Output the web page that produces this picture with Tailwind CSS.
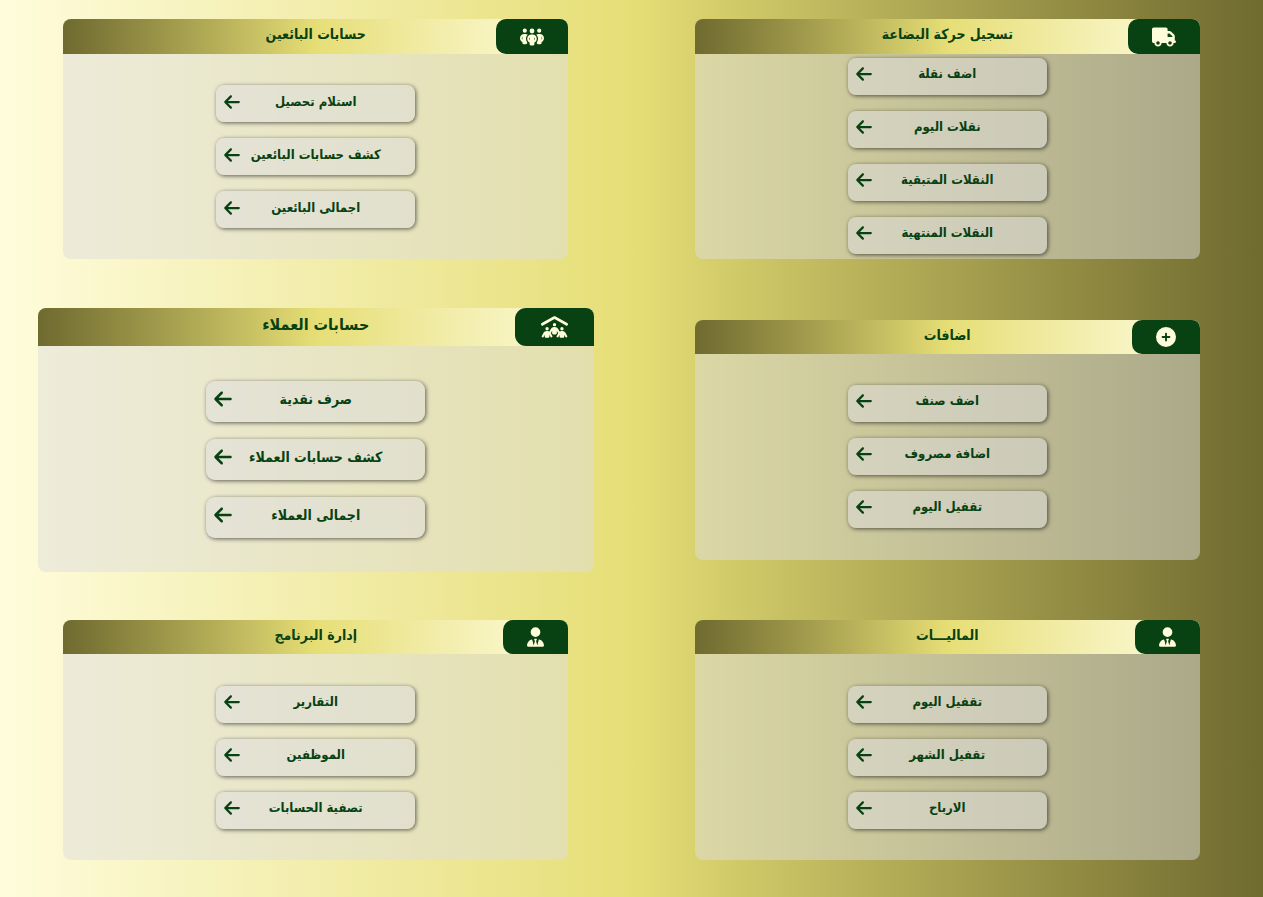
<!DOCTYPE html>
<html lang="ar" dir="rtl">
<head>
<meta charset="utf-8">
<meta name="viewport" content="width=device-width, initial-scale=1">
<title>لوحة التحكم</title>
<script src="https://cdn.jsdelivr.net/npm/@tailwindcss/browser@4"></script>
</head>
<body class="min-h-screen bg-linear-to-r from-[#fffcdc] via-[#e6de75] to-[#6f6a2f] font-['DejaVu_Sans_Condensed','DejaVu_Sans',sans-serif] font-bold text-[#084112]">
<svg class="hidden" aria-hidden="true">
  <symbol id="arrow" viewBox="0 0 448 512"><path d="M9.400 233.400c-12.500 12.500-12.500 32.800 0 45.300l160 160c12.500 12.500 32.800 12.500 45.300 0s12.500-32.800 0-45.300L109.200 288 416 288c17.700 0 32-14.300 32-32s-14.300-32-32-32l-306.700 0L214.600 118.600c12.500-12.500 12.500-32.800 0-45.300s-32.800-12.500-45.300 0l-160 160z"/></symbol>
  <symbol id="truck" viewBox="0 0 640 512"><path d="M48 0C21.500 0 0 21.500 0 48V368c0 26.500 21.500 48 48 48H64c0 53 43 96 96 96s96-43 96-96H384c0 53 43 96 96 96s96-43 96-96h32c17.700 0 32-14.300 32-32s-14.300-32-32-32V288 256 237.300c0-17-6.700-33.300-18.700-45.300L512 114.700c-12-12-28.300-18.700-45.300-18.700H416V48c0-26.500-21.500-48-48-48H48zM416 160h50.700L544 237.300V256H416V160zM112 416a48 48 0 1 1 96 0 48 48 0 1 1 -96 0zm368-48a48 48 0 1 1 0 96 48 48 0 1 1 0-96z"/></symbol>
  <symbol id="group" viewBox="0 0 640 512"><path d="M72 88a56 56 0 1 1 112 0A56 56 0 1 1 72 88zM64 245.700C54 256.900 48 271.800 48 288s6 31.100 16 42.300V245.700zm144.400-49.300C178.700 222.700 160 261.200 160 304c0 34.300 12 65.800 32 90.500V416c0 17.700-14.300 32-32 32H96c-17.700 0-32-14.300-32-32V389.200C26.200 371.200 0 332.700 0 288c0-61.900 50.100-112 112-112h32c24 0 46.200 7.500 64.400 20.300zM448 416V394.500c20-24.700 32-56.200 32-90.500c0-42.800-18.700-81.300-48.400-107.700C449.800 183.500 472 176 496 176h32c61.900 0 112 50.100 112 112c0 44.700-26.200 83.200-64 101.200V416c0 17.700-14.300 32-32 32H480c-17.700 0-32-14.300-32-32zm8-328a56 56 0 1 1 112 0A56 56 0 1 1 456 88zM576 245.700v84.700c10-11.300 16-26.100 16-42.300s-6-31.100-16-42.300zM320 32a64 64 0 1 1 0 128 64 64 0 1 1 0-128zM240 304c0 16.200 6 31 16 42.300V261.700c-10 11.300-16 26.100-16 42.300zm144-42.300v84.700c10-11.300 16-26.100 16-42.300s-6-31.100-16-42.300zM448 304c0 44.700-26.200 83.200-64 101.200V448c0 17.700-14.300 32-32 32H288c-17.700 0-32-14.300-32-32V405.200c-37.800-18-64-56.500-64-101.200c0-61.900 50.100-112 112-112h32c61.900 0 112 50.100 112 112z"/></symbol>
  <symbol id="roof" viewBox="0 0 640 512"><path d="M335.500 4l288 160c15.400 8.600 21 28.100 12.400 43.500s-28.100 21-43.500 12.400L320 68.600 47.500 220c-15.400 8.600-34.900 3-43.500-12.400s-3-34.900 12.400-43.500L304.500 4c9.700-5.400 21.400-5.400 31.100 0zM320 160a40 40 0 1 1 0 80 40 40 0 1 1 0-80zM144 256a40 40 0 1 1 0 80 40 40 0 1 1 0-80zm312 40a40 40 0 1 1 80 0 40 40 0 1 1-80 0zM226.900 491.400L200 441.500V480c0 17.700-14.300 32-32 32H120c-17.700 0-32-14.300-32-32V441.500L61.100 491.400c-6.300 11.700-20.800 16-32.500 9.800s-16-20.800-9.800-32.500l37.900-70.300c15.300-28.500 45.100-46.300 77.500-46.300h19.500c16.300 0 31.900 4.500 45.400 12.600l33.600-62.300c15.300-28.500 45.100-46.300 77.500-46.300h19.500c32.400 0 62.100 17.800 77.500 46.300l33.600 62.300c13.500-8.100 29.100-12.600 45.400-12.600h19.500c32.400 0 62.100 17.800 77.500 46.300l37.900 70.300c6.300 11.700 1.900 26.200-9.800 32.500s-26.200 1.900-32.500-9.800L552 441.500V480c0 17.700-14.300 32-32 32H472c-17.700 0-32-14.300-32-32V441.500l-26.900 49.900c-6.300 11.700-20.800 16-32.500 9.800s-16-20.800-9.800-32.500l36.300-67.500c-1.700-1.700-3.200-3.600-4.300-5.800L376 345.500V400c0 17.700-14.300 32-32 32H296c-17.700 0-32-14.300-32-32V345.500l-26.900 49.900c-1.200 2.200-2.600 4.100-4.300 5.800l36.300 67.500c6.300 11.700 1.900 26.200-9.800 32.500s-26.200 1.900-32.500-9.800z"/></symbol>
  <symbol id="plus" viewBox="0 0 512 512"><path fill-rule="evenodd" d="M256 512A256 256 0 1 0 256 0a256 256 0 1 0 0 512zM232 344V280H168a24 24 0 1 1 0-48h64V168a24 24 0 1 1 48 0v64h64a24 24 0 1 1 0 48H280v64a24 24 0 1 1-48 0z"/></symbol>
  <symbol id="tie" viewBox="0 0 448 512"><path d="M96 128a128 128 0 1 0 256 0A128 128 0 1 0 96 128zm94.500 200.200l18.600 31L175.800 483.100l-36-146.900c-2-8.100-9.800-13.400-17.900-11.300C51.900 342.400 0 405.800 0 481.300c0 17 13.800 30.700 30.700 30.700H417.300c17 0 30.700-13.800 30.700-30.700c0-75.500-51.900-138.900-121.900-156.400c-8.100-2-15.900 3.300-17.900 11.300l-36 146.900L238.900 359.200l18.600-31c6.400-10.700-1.300-24.200-13.700-24.200H224 204.300c-12.400 0-20.100 13.600-13.700 24.200z"/></symbol>
</svg>
<main class="grid grid-cols-2 grid-rows-[241px_240px_240px] items-start justify-items-center gap-y-[60px] pt-[19px] pb-9">

  <section class="flex h-60 w-4/5 flex-col overflow-hidden rounded-lg bg-[#ddd]/50">
    <header class="grid h-[35px] grid-cols-[1fr_auto_1fr] bg-linear-to-l from-[#fffcdc] via-[#e6de75] to-[#6f6a2f]">
      <span class="flex items-center justify-self-start rounded-l-[10px] bg-[#084112] px-6 text-[#fffcdc]"><svg class="h-5 w-6 fill-current"><use href="#truck"/></svg></span>
      <h2 class="text-sm leading-[30px]">تسجيل حركة البضاعة</h2>
    </header>
    <div class="flex flex-1 flex-col items-center justify-center gap-4 pb-0.5">
      <button class="grid h-[37px] w-[199px] grid-cols-[16px_1fr_16px] items-center rounded-lg bg-[#ddd]/50 px-2 pb-1 text-[13px] shadow-[1px_1px_4px_rgba(0,0,0,0.6)]"><span class="col-start-2 whitespace-nowrap">اضف نقلة</span><svg class="h-[18px] w-4 fill-current"><use href="#arrow"/></svg></button>
      <button class="grid h-[37px] w-[199px] grid-cols-[16px_1fr_16px] items-center rounded-lg bg-[#ddd]/50 px-2 pb-1 text-[13px] shadow-[1px_1px_4px_rgba(0,0,0,0.6)]"><span class="col-start-2 whitespace-nowrap">نقلات اليوم</span><svg class="h-[18px] w-4 fill-current"><use href="#arrow"/></svg></button>
      <button class="grid h-[37px] w-[199px] grid-cols-[16px_1fr_16px] items-center rounded-lg bg-[#ddd]/50 px-2 pb-1 text-[13px] shadow-[1px_1px_4px_rgba(0,0,0,0.6)]"><span class="col-start-2 whitespace-nowrap">النقلات المتبقية</span><svg class="h-[18px] w-4 fill-current"><use href="#arrow"/></svg></button>
      <button class="grid h-[37px] w-[199px] grid-cols-[16px_1fr_16px] items-center rounded-lg bg-[#ddd]/50 px-2 pb-1 text-[13px] shadow-[1px_1px_4px_rgba(0,0,0,0.6)]"><span class="col-start-2 whitespace-nowrap">النقلات المنتهية</span><svg class="h-[18px] w-4 fill-current"><use href="#arrow"/></svg></button>
    </div>
  </section>

  <section class="flex h-60 w-4/5 flex-col overflow-hidden rounded-lg bg-[#ddd]/50">
    <header class="grid h-[35px] grid-cols-[1fr_auto_1fr] bg-linear-to-l from-[#fffcdc] via-[#e6de75] to-[#6f6a2f]">
      <span class="flex items-center justify-self-start rounded-l-[10px] bg-[#084112] px-6 text-[#fffcdc]"><svg class="h-5 w-6 fill-current"><use href="#group"/></svg></span>
      <h2 class="text-sm leading-[30px]">حسابات البائعين</h2>
    </header>
    <div class="flex flex-1 flex-col items-center justify-center gap-4">
      <button class="grid h-[37px] w-[199px] grid-cols-[16px_1fr_16px] items-center rounded-lg bg-[#ddd]/50 px-2 pb-1 text-[13px] shadow-[1px_1px_4px_rgba(0,0,0,0.6)]"><span class="col-start-2 whitespace-nowrap">استلام تحصيل</span><svg class="h-[18px] w-4 fill-current"><use href="#arrow"/></svg></button>
      <button class="grid h-[37px] w-[199px] grid-cols-[16px_1fr_16px] items-center rounded-lg bg-[#ddd]/50 px-2 pb-1 text-[13px] shadow-[1px_1px_4px_rgba(0,0,0,0.6)]"><span class="col-start-2 whitespace-nowrap">كشف حسابات البائعين</span><svg class="h-[18px] w-4 fill-current"><use href="#arrow"/></svg></button>
      <button class="grid h-[37px] w-[199px] grid-cols-[16px_1fr_16px] items-center rounded-lg bg-[#ddd]/50 px-2 pb-1 text-[13px] shadow-[1px_1px_4px_rgba(0,0,0,0.6)]"><span class="col-start-2 whitespace-nowrap">اجمالى البائعين</span><svg class="h-[18px] w-4 fill-current"><use href="#arrow"/></svg></button>
    </div>
  </section>

  <section class="flex h-60 w-4/5 flex-col overflow-hidden rounded-lg bg-[#ddd]/50">
    <header class="grid h-[34px] grid-cols-[1fr_auto_1fr] bg-linear-to-l from-[#fffcdc] via-[#e6de75] to-[#6f6a2f]">
      <span class="flex items-center justify-self-start rounded-l-[10px] bg-[#084112] px-6 text-[#fffcdc]"><svg class="h-5 w-5 fill-current"><use href="#plus"/></svg></span>
      <h2 class="text-sm leading-[30px]">اضافات</h2>
    </header>
    <div class="flex flex-1 flex-col items-center justify-center gap-4 pb-0.5">
      <button class="grid h-[37px] w-[199px] grid-cols-[16px_1fr_16px] items-center rounded-lg bg-[#ddd]/50 px-2 pb-1 text-[13px] shadow-[1px_1px_4px_rgba(0,0,0,0.6)]"><span class="col-start-2 whitespace-nowrap">اضف صنف</span><svg class="h-[18px] w-4 fill-current"><use href="#arrow"/></svg></button>
      <button class="grid h-[37px] w-[199px] grid-cols-[16px_1fr_16px] items-center rounded-lg bg-[#ddd]/50 px-2 pb-1 text-[13px] shadow-[1px_1px_4px_rgba(0,0,0,0.6)]"><span class="col-start-2 whitespace-nowrap">اضافة مصروف</span><svg class="h-[18px] w-4 fill-current"><use href="#arrow"/></svg></button>
      <button class="grid h-[37px] w-[199px] grid-cols-[16px_1fr_16px] items-center rounded-lg bg-[#ddd]/50 px-2 pb-1 text-[13px] shadow-[1px_1px_4px_rgba(0,0,0,0.6)]"><span class="col-start-2 whitespace-nowrap">تقفيل اليوم</span><svg class="h-[18px] w-4 fill-current"><use href="#arrow"/></svg></button>
    </div>
  </section>

  <!-- Highlighted card, a tenth larger than the others -->
  <section class="-my-3 flex h-66 w-[88%] flex-col overflow-hidden rounded-lg bg-[#ddd]/50">
    <header class="grid h-[38px] grid-cols-[1fr_auto_1fr] bg-linear-to-l from-[#fffcdc] via-[#e6de75] to-[#6f6a2f]">
      <span class="flex items-center justify-self-start rounded-l-[11px] bg-[#084112] px-[26px] text-[#fffcdc]"><svg class="h-[22px] w-[27px] fill-current"><use href="#roof"/></svg></span>
      <h2 class="text-base leading-[34px]">حسابات العملاء</h2>
    </header>
    <div class="flex flex-1 flex-col items-center justify-center gap-[17px]">
      <button class="grid h-[41px] w-[219px] grid-cols-[18px_1fr_18px] items-center rounded-[9px] bg-[#ddd]/50 px-2 pb-1 text-sm shadow-[1px_1px_4px_rgba(0,0,0,0.6)]"><span class="col-start-2 whitespace-nowrap">صرف نقدية</span><svg class="h-5 w-[18px] fill-current"><use href="#arrow"/></svg></button>
      <button class="grid h-[41px] w-[219px] grid-cols-[18px_1fr_18px] items-center rounded-[9px] bg-[#ddd]/50 px-2 pb-1 text-sm shadow-[1px_1px_4px_rgba(0,0,0,0.6)]"><span class="col-start-2 whitespace-nowrap">كشف حسابات العملاء</span><svg class="h-5 w-[18px] fill-current"><use href="#arrow"/></svg></button>
      <button class="grid h-[41px] w-[219px] grid-cols-[18px_1fr_18px] items-center rounded-[9px] bg-[#ddd]/50 px-2 pb-1 text-sm shadow-[1px_1px_4px_rgba(0,0,0,0.6)]"><span class="col-start-2 whitespace-nowrap">اجمالى العملاء</span><svg class="h-5 w-[18px] fill-current"><use href="#arrow"/></svg></button>
    </div>
  </section>

  <section class="flex h-60 w-4/5 flex-col overflow-hidden rounded-lg bg-[#ddd]/50">
    <header class="grid h-[34px] grid-cols-[1fr_auto_1fr] bg-linear-to-l from-[#fffcdc] via-[#e6de75] to-[#6f6a2f]">
      <span class="flex items-center justify-self-start rounded-l-[10px] bg-[#084112] px-6 text-[#fffcdc]"><svg class="h-5 w-[17px] fill-current"><use href="#tie"/></svg></span>
      <h2 class="text-sm leading-[30px]">الماليـــات</h2>
    </header>
    <div class="flex flex-1 flex-col items-center justify-center gap-4">
      <button class="grid h-[37px] w-[199px] grid-cols-[16px_1fr_16px] items-center rounded-lg bg-[#ddd]/50 px-2 pb-1 text-[13px] shadow-[1px_1px_4px_rgba(0,0,0,0.6)]"><span class="col-start-2 whitespace-nowrap">تقفيل اليوم</span><svg class="h-[18px] w-4 fill-current"><use href="#arrow"/></svg></button>
      <button class="grid h-[37px] w-[199px] grid-cols-[16px_1fr_16px] items-center rounded-lg bg-[#ddd]/50 px-2 pb-1 text-[13px] shadow-[1px_1px_4px_rgba(0,0,0,0.6)]"><span class="col-start-2 whitespace-nowrap">تقفيل الشهر</span><svg class="h-[18px] w-4 fill-current"><use href="#arrow"/></svg></button>
      <button class="grid h-[37px] w-[199px] grid-cols-[16px_1fr_16px] items-center rounded-lg bg-[#ddd]/50 px-2 pb-1 text-[13px] shadow-[1px_1px_4px_rgba(0,0,0,0.6)]"><span class="col-start-2 whitespace-nowrap">الارباح</span><svg class="h-[18px] w-4 fill-current"><use href="#arrow"/></svg></button>
    </div>
  </section>

  <section class="flex h-60 w-4/5 flex-col overflow-hidden rounded-lg bg-[#ddd]/50">
    <header class="grid h-[34px] grid-cols-[1fr_auto_1fr] bg-linear-to-l from-[#fffcdc] via-[#e6de75] to-[#6f6a2f]">
      <span class="flex items-center justify-self-start rounded-l-[10px] bg-[#084112] px-6 text-[#fffcdc]"><svg class="h-5 w-[17px] fill-current"><use href="#tie"/></svg></span>
      <h2 class="text-sm leading-[30px]">إدارة البرنامج</h2>
    </header>
    <div class="flex flex-1 flex-col items-center justify-center gap-4">
      <button class="grid h-[37px] w-[199px] grid-cols-[16px_1fr_16px] items-center rounded-lg bg-[#ddd]/50 px-2 pb-1 text-[13px] shadow-[1px_1px_4px_rgba(0,0,0,0.6)]"><span class="col-start-2 whitespace-nowrap">التقارير</span><svg class="h-[18px] w-4 fill-current"><use href="#arrow"/></svg></button>
      <button class="grid h-[37px] w-[199px] grid-cols-[16px_1fr_16px] items-center rounded-lg bg-[#ddd]/50 px-2 pb-1 text-[13px] shadow-[1px_1px_4px_rgba(0,0,0,0.6)]"><span class="col-start-2 whitespace-nowrap">الموظفين</span><svg class="h-[18px] w-4 fill-current"><use href="#arrow"/></svg></button>
      <button class="grid h-[37px] w-[199px] grid-cols-[16px_1fr_16px] items-center rounded-lg bg-[#ddd]/50 px-2 pb-1 text-[13px] shadow-[1px_1px_4px_rgba(0,0,0,0.6)]"><span class="col-start-2 whitespace-nowrap">تصفية الحسابات</span><svg class="h-[18px] w-4 fill-current"><use href="#arrow"/></svg></button>
    </div>
  </section>

</main>
</body>
</html>
